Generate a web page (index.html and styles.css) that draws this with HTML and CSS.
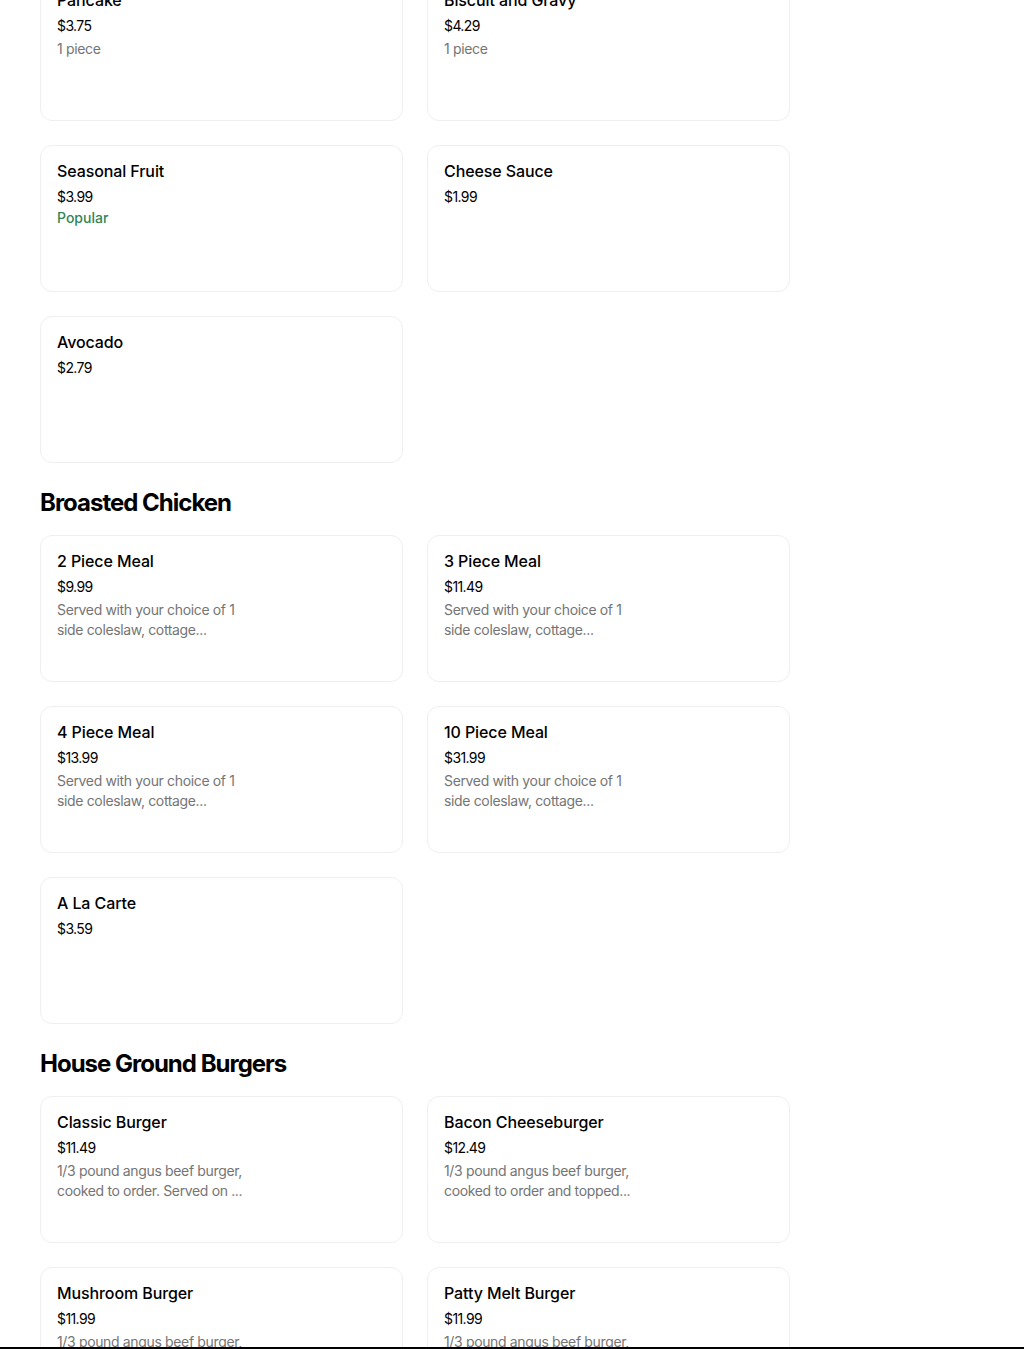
FILE: index.html
```html
<!DOCTYPE html>
<html lang="en">
<head>
<meta charset="utf-8">
<title>Menu</title>
<link rel="stylesheet" href="styles.css">
</head>
<body>
<main class="menu">
  <section class="section section-first">
    <div class="grid">
      <div class="card">
        <div class="title">Pancake</div>
        <div class="price">$3.75</div>
        <div class="desc"><span>1 piece</span></div>
      </div>
      <div class="card">
        <div class="title">Biscuit and Gravy</div>
        <div class="price">$4.29</div>
        <div class="desc"><span>1 piece</span></div>
      </div>
      <div class="card">
        <div class="title">Seasonal Fruit</div>
        <div class="price">$3.99</div>
        <div class="popular">Popular</div>
      </div>
      <div class="card">
        <div class="title">Cheese Sauce</div>
        <div class="price">$1.99</div>
      </div>
      <div class="card">
        <div class="title">Avocado</div>
        <div class="price">$2.79</div>
      </div>
    </div>
  </section>

  <section class="section">
    <h2 class="heading">Broasted Chicken</h2>
    <div class="grid">
      <div class="card">
        <div class="title">2 Piece Meal</div>
        <div class="price">$9.99</div>
        <div class="desc"><span>Served with your choice of 1</span><span>side coleslaw, cottage...</span></div>
      </div>
      <div class="card">
        <div class="title">3 Piece Meal</div>
        <div class="price">$11.49</div>
        <div class="desc"><span>Served with your choice of 1</span><span>side coleslaw, cottage...</span></div>
      </div>
      <div class="card">
        <div class="title">4 Piece Meal</div>
        <div class="price">$13.99</div>
        <div class="desc"><span>Served with your choice of 1</span><span>side coleslaw, cottage...</span></div>
      </div>
      <div class="card">
        <div class="title">10 Piece Meal</div>
        <div class="price">$31.99</div>
        <div class="desc"><span>Served with your choice of 1</span><span>side coleslaw, cottage...</span></div>
      </div>
      <div class="card">
        <div class="title">A La Carte</div>
        <div class="price">$3.59</div>
      </div>
    </div>
  </section>

  <section class="section">
    <h2 class="heading">House Ground Burgers</h2>
    <div class="grid">
      <div class="card">
        <div class="title">Classic Burger</div>
        <div class="price">$11.49</div>
        <div class="desc"><span>1/3 pound angus beef burger,</span><span>cooked to order. Served on ...</span></div>
      </div>
      <div class="card">
        <div class="title">Bacon Cheeseburger</div>
        <div class="price">$12.49</div>
        <div class="desc"><span>1/3 pound angus beef burger,</span><span>cooked to order and topped...</span></div>
      </div>
      <div class="card">
        <div class="title">Mushroom Burger</div>
        <div class="price">$11.99</div>
        <div class="desc"><span>1/3 pound angus beef burger,</span><span>cooked to order and topped...</span></div>
      </div>
      <div class="card">
        <div class="title">Patty Melt Burger</div>
        <div class="price">$11.99</div>
        <div class="desc"><span>1/3 pound angus beef burger,</span><span>cooked to order. Served on ...</span></div>
      </div>
    </div>
  </section>
</main>
<div class="bottom-bar"></div>
</body>
</html>
```

FILE: styles.css
```css
* {
  box-sizing: border-box;
}

html, body {
  margin: 0;
  padding: 0;
  background: #ffffff;
}

body {
  font-family: Inter, "Noto Sans", "Liberation Sans", sans-serif;
  color: #000000;
}

.menu {
  width: 750px;
  margin-left: 40px;
  margin-top: -26px;
  padding-bottom: 40px;
}

.section {
  display: flex;
  flex-direction: column;
}

.heading {
  margin: 24px 0 16px;
  font-size: 24px;
  line-height: 32px;
  font-weight: 700;
  letter-spacing: -1px;
  color: #000;
}

.grid {
  display: grid;
  grid-template-columns: 363px 363px;
  column-gap: 24px;
  row-gap: 24px;
}

.card {
  height: 147px;
  border: 1px solid #efefef;
  border-radius: 12px;
  padding: 15px 16px 16px;
  display: flex;
  flex-direction: column;
  background: #fff;
}

.title {
  font-size: 16px;
  line-height: 20px;
  font-weight: 500;
  letter-spacing: -0.1px;
  color: #000;
}

.price {
  margin-top: 6px;
  font-size: 14px;
  line-height: 20px;
  color: #000;
  letter-spacing: -0.6px;
}

.desc {
  margin-top: 3px;
  display: flex;
  flex-direction: column;
  font-size: 14px;
  line-height: 20px;
  letter-spacing: -0.35px;
  color: #757575;
}

.desc span {
  display: block;
  white-space: nowrap;
}

.popular {
  margin-top: 1px;
  font-size: 14px;
  line-height: 20px;
  font-weight: 500;
  color: #2f8655;
}

.bottom-bar {
  position: fixed;
  left: 0;
  right: 0;
  bottom: 0;
  height: 2px;
  background: #000;
}
```
